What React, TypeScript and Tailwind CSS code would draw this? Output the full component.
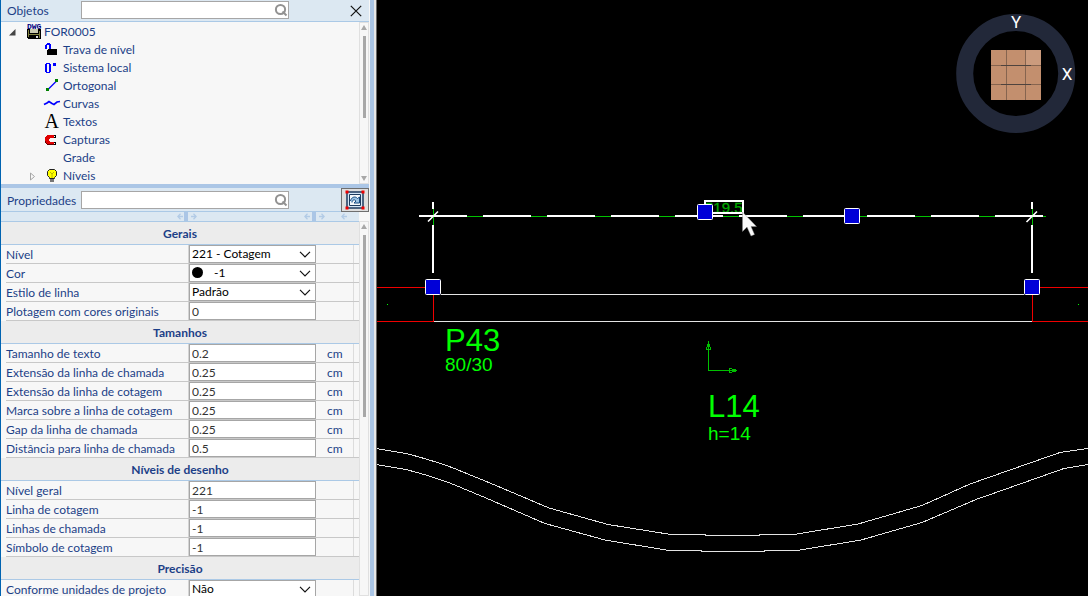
import type { ReactNode } from "react";

function SearchBox({ label, id }: { label: string; id: string }) {
  return (
    <>
      <label htmlFor={id} className="w-[74px] shrink-0 pt-0.5">
        {label}
      </label>
      <div className="relative h-[18px] w-[208px]">
        <input
          id={id}
          type="text"
          className="block h-full w-full border border-[#a6a6a6] bg-white pr-5 pl-1 outline-none"
        />
        <svg className="absolute top-0.5 right-px" width="14" height="14" viewBox="0 0 14 14" fill="none" stroke="#929292" strokeWidth="2">
          <circle cx="6.5" cy="6.5" r="4.6" />
          <path d="M8.5 8.5 12.5 12.5" />
        </svg>
      </div>
    </>
  );
}

function ScrollBar({ thumb, down }: { thumb: string; down?: boolean }) {
  return (
    <div className="flex w-2.5 shrink-0 flex-col items-center border border-[#e0e0e0] bg-[#f7f7f7]">
      <svg className="mt-0.5 mb-1 shrink-0" width="6" height="5" viewBox="0 0 6 5" fill="#a8a8a8">
        <path d="M3 0 6 5H0z" />
      </svg>
      <div className={`w-[3px] bg-[#a8a8a8] ${thumb}`} />
      {down && (
        <svg className="mt-auto mb-0.5 shrink-0" width="6" height="5" viewBox="0 0 6 5" fill="#a8a8a8">
          <path d="M0 0H6L3 5z" />
        </svg>
      )}
    </div>
  );
}

function Icon({ children }: { children?: ReactNode }) {
  return (
    <svg width="16" height="18" viewBox="0 0 16 18" className="shrink-0 overflow-visible" fill="none">
      {children}
    </svg>
  );
}

const treeItems: { name: string; icon: ReactNode; expandable?: boolean }[] = [
  {
    name: "Trava de nível",
    icon: (
      <g shapeRendering="crispEdges">
        <path d="M1 8V4H2V3H3V2H6V3H7V8H5V4H3V8z" fill="#0000ff" />
        <path d="M4 8H13V14H3V9H4z" fill="#000" />
      </g>
    ),
  },
  {
    name: "Sistema local",
    icon: (
      <g shapeRendering="crispEdges" fill="#0000ff">
        <path fillRule="evenodd" d="M2 4H6V5H7V13H6V14H2V13H1V5H2zM3 5V13H5V5z" />
        <path d="M9 4H12V7H9z" />
      </g>
    ),
  },
  {
    name: "Ortogonal",
    icon: (
      <g>
        <path d="M4 12.5 12 4.5" stroke="#0000ff" strokeWidth="1.3" />
        <path d="M2 11H5V14H2zM11 2H14V5H11z" fill="#008000" />
      </g>
    ),
  },
  {
    name: "Curvas",
    icon: <path d="M0 9.5 3 8 5 6.5 8 8.5 10 9.5 13 7 16 6.5" stroke="#0000ff" strokeWidth="1.7" />,
  },
  {
    name: "Textos",
    icon: (
      <text x="0.5" y="15" className="font-['Liberation_Serif',serif]" fontSize="20" fill="#000">
        A
      </text>
    ),
  },
  {
    name: "Capturas",
    icon: (
      <g shapeRendering="crispEdges">
        <path d="M3 4H10V7H6V8H5V10H6V11H10V14H3V13H2V12H1V6H2V5H3z" fill="#e00000" />
        <path d="M3 13H10V14H3zM2 12H3V13H2zM1 10H2V12H1z" fill="#600" />
        <path d="M10 4H12V7H10zM10 11H12V14H10z" fill="#000" />
        <path d="M10 5H11V6H10zM10 12H11V13H10z" fill="#fff" />
      </g>
    ),
  },
  { name: "Grade", icon: null },
  {
    name: "Níveis",
    expandable: true,
    icon: (
      <g>
        <path d="M5.5 11.5V10.5L3.5 8.5V4.5L5.5 2.5H10.5L12.5 4.5V8.5L10.5 10.5V11.5z" fill="#ffff00" stroke="#222" />
        <path d="M6 5 8 7 10 5M8 7V11" stroke="#b8b800" />
        <path d="M6 12H10V15H6z" fill="#777" />
      </g>
    ),
  },
];

function ObjectTree() {
  return (
    <ul className="flex-1 pt-px">
      <li>
        <div className="flex h-[18px] items-center pl-2">
          <svg width="7" height="7" viewBox="0 0 7 7" className="mr-2.5">
            <path d="M6.5 0V6.5H0z" fill="#444" />
          </svg>
          <Icon>
            <text x="1" y="6" fontSize="8" fontWeight="700" fill="#000080" className="font-['Liberation_Mono',monospace]">
              DWG
            </text>
            <g shapeRendering="crispEdges">
              <path d="M1 6H15V16H2V15H1z" fill="#000" />
              <path d="M2 7H3V14H2zM13 8H14V15H13zM3 11H13V12H3z" fill="#808040" />
              <path d="M4 6H12V10H4z" fill="#c9c9b0" />
              <path d="M10 13H12V15H10z" fill="#ddd" />
            </g>
          </Icon>
          <span className="ml-0.5">FOR0005</span>
        </div>
        <ul>
          {treeItems.map((item) => (
            <li key={item.name} className="flex h-[18px] items-center pl-7">
              <span className="w-[15px]">
                {item.expandable && (
                  <svg width="7" height="9" viewBox="0 0 7 9" fill="none" stroke="#a6a6a6">
                    <path d="M1.5 1V8L5.5 4.5z" />
                  </svg>
                )}
              </span>
              <Icon>{item.icon}</Icon>
              <span className="ml-[3px]">{item.name}</span>
            </li>
          ))}
        </ul>
      </li>
    </ul>
  );
}

type Row = { label: string; value: string; unit?: string; select?: boolean; swatch?: boolean };

const sections: { title: string; rows: Row[] }[] = [
  {
    title: "Gerais",
    rows: [
      { label: "Nível", value: "221 - Cotagem", select: true },
      { label: "Cor", value: "-1", select: true, swatch: true },
      { label: "Estilo de linha", value: "Padrão", select: true },
      { label: "Plotagem com cores originais", value: "0" },
    ],
  },
  {
    title: "Tamanhos",
    rows: [
      { label: "Tamanho de texto", value: "0.2", unit: "cm" },
      { label: "Extensão da linha de chamada", value: "0.25", unit: "cm" },
      { label: "Extensão da linha de cotagem", value: "0.25", unit: "cm" },
      { label: "Marca sobre a linha de cotagem", value: "0.25", unit: "cm" },
      { label: "Gap da linha de chamada", value: "0.25", unit: "cm" },
      { label: "Distância para linha de chamada", value: "0.5", unit: "cm" },
    ],
  },
  {
    title: "Níveis de desenho",
    rows: [
      { label: "Nível geral", value: "221" },
      { label: "Linha de cotagem", value: "-1" },
      { label: "Linhas de chamada", value: "-1" },
      { label: "Símbolo de cotagem", value: "-1" },
    ],
  },
  {
    title: "Precisão",
    rows: [{ label: "Conforme unidades de projeto", value: "Não", select: true }],
  },
];

function PropertyRow({ row }: { row: Row }) {
  return (
    <div className="ml-[5px] flex h-[19px] border-b border-[#c8c8c8]">
      <label htmlFor={row.label} className="w-[183px] shrink-0 border-r border-[#d4d4d4] leading-[19px] whitespace-nowrap">
        {row.label}
      </label>
      <div className="relative w-[127px] shrink-0">
        {row.select ? (
          <>
            <select
              id={row.label}
              defaultValue={row.value}
              className={`block h-[18px] w-full appearance-none border border-[#a6a6a6] bg-white text-black outline-none ${row.swatch ? "pl-6" : "pl-0.5"}`}
            >
              <option>{row.value}</option>
            </select>
            {row.swatch && <span className="absolute top-[3px] left-[3px] size-[11px] rounded-full bg-black" />}
            <svg className="pointer-events-none absolute top-1.5 right-[5px]" width="12" height="7" viewBox="0 0 12 7" fill="none" stroke="#111" strokeWidth="1.2">
              <path d="M1 0.8 6 5.8 11 0.8" />
            </svg>
          </>
        ) : (
          <input
            id={row.label}
            type="text"
            defaultValue={row.value}
            className="block h-[18px] w-full border border-[#a6a6a6] bg-white pl-0.5 text-[#333] outline-none"
          />
        )}
      </div>
      <span className="w-[38px] border-r border-[#dcdcdc] pl-[11px] leading-[19px]">{row.unit}</span>
    </div>
  );
}

function Arrow({ right }: { right?: boolean }) {
  return (
    <svg width="6" height="7" viewBox="0 0 6 7" fill="none" stroke="#b2cbe6" strokeWidth="1.3">
      <path d={right ? "M0 3.5H5M2.5 0.8 5.2 3.5 2.5 6.2" : "M6 3.5H1M3.5 0.8 0.8 3.5 3.5 6.2"} />
    </svg>
  );
}

function ColumnHandles() {
  return (
    <div className="flex h-2.5 items-stretch border-b border-[#abc9e6] bg-[#dce8f2]">
      <div className="flex w-[187px] items-center justify-end gap-px">
        <Arrow />
        <span className="h-full w-1 bg-[#abc6e6]" />
      </div>
      <div className="flex w-32 items-center gap-0.5 pl-[3px]">
        <Arrow right />
        <span className="flex-1" />
        <Arrow />
        <span className="h-full w-1 bg-[#abc6e6]" />
      </div>
      <div className="flex flex-1 items-center gap-4 pl-[3px]">
        <Arrow right />
        <Arrow />
      </div>
    </div>
  );
}

function SidePanel() {
  return (
    <aside className="flex h-full w-[377px] shrink-0 overflow-hidden border-l border-[#0063b1] bg-[#f7f7f7]">
      <div className="flex min-w-0 flex-1 flex-col">
        <header className="flex h-[22px] shrink-0 items-center border-b border-[#abc9e6] bg-[#dce8f2] pb-0.5 pl-1.5">
          <SearchBox label="Objetos" id="search-objects" />
          <button type="button" aria-label="Fechar" className="mr-1.5 ml-auto p-px pt-[3px]">
            <svg width="12" height="12" viewBox="0 0 12 12" stroke="#111" strokeWidth="1.2">
              <path d="M0.8 0.8 11.2 11.2M11.2 0.8 0.8 11.2" />
            </svg>
          </button>
        </header>
        <div className="flex h-[162px] shrink-0">
          <ObjectTree />
          <ScrollBar thumb="mt-0.5 h-[82px]" down />
        </div>
        <div className="h-1 shrink-0 bg-[#abc6e6]" />
        <header className="flex h-6 shrink-0 items-center border-b border-[#abc9e6] bg-[#dce8f2] pl-1.5">
          <SearchBox label="Propriedades" id="search-properties" />
          <button
            type="button"
            aria-label="Atualizar seleção"
            className="ml-auto flex h-6 w-7 items-center justify-center self-start border border-[#6f6f6f] bg-[#dedede]"
          >
            <svg width="20" height="20" viewBox="0 0 20 20" fill="none">
              <path d="M2 2H18V18H2z" fill="#d4e6f5" stroke="#1c3a5e" strokeWidth="1.5" />
              <path d="M4.5 4.5H15.5V15.5H4.5z" fill="#f4f8fb" stroke="#1c3a5e" />
              <path d="M5.5 11C6 7.500 10 5.500 12.500 8.500L14.500 7V13H9L11 11C9.500 9 7.500 9.500 7 12.500" fill="#9ec5e4" stroke="#174a80" />
              <path d="M0.5 0.5H3.5V3.5H0.5zM16.5 0.5H19.5V3.5H16.5zM0.5 16.5H3.5V19.5H0.5zM16.5 16.5H19.5V19.5H16.5z" fill="#f00000" />
            </svg>
          </button>
        </header>
        <div className="flex min-h-0 flex-1">
          <div className="flex-1 overflow-hidden">
            <ColumnHandles />
            {sections.map((section) => (
              <section key={section.title}>
                <h2 className="h-[23px] border-b border-[#abc9e6] bg-[#ececec] text-center leading-[23px] font-bold">{section.title}</h2>
                {section.rows.map((row) => (
                  <PropertyRow key={row.label} row={row} />
                ))}
              </section>
            ))}
          </div>
          <div className="flex pt-[9px]">
            <ScrollBar thumb="mt-0.5 h-[182px]" />
          </div>
        </div>
      </div>
      <div className="ml-px w-1 shrink-0 bg-[#abc6e6]" />
      <div className="w-0.5 shrink-0 bg-[#e8e8e8]" />
      <div className="w-px shrink-0 bg-[#666]" />
    </aside>
  );
}

const greenDashes = [467, 531, 595, 659, 723, 787, 851, 915, 979];
const grips = [
  [425, 279],
  [697, 204],
  [844, 208],
  [1024, 279],
];

function Drawing() {
  return (
    <svg
      className="block h-full w-full font-['Liberation_Sans',Arial,sans-serif]"
      viewBox="377 0 711 596"
      preserveAspectRatio="xMidYMid slice"
      fill="none"
    >
      <g shapeRendering="crispEdges">
        <path d="M441 294.500H1024M434 321.500H1032" stroke="#e4e4e4" />
        <path d="M377 287.500H425M377 321.500H433M433.500 295V322M1040 287.500H1088M1032.500 295V322M1033 321.500H1088" stroke="#f00000" />
        <path d="M387 304H388V305H387zM1078 304H1079V305H1078z" fill="#00ff00" />
        <path d="M419 216H1043" stroke="#fff" strokeWidth="2" />
        {greenDashes.map((x) => (
          <g key={x}>
            <path d={`M${x} 216H${x + 16}`} stroke="#000" strokeWidth="2" />
            <path d={`M${x} 216.500H${x + 16}`} stroke="#00c000" />
          </g>
        ))}
        <path d="M1043 216.500H1046M433.500 209V225M1032.500 209V225" stroke="#00c000" />
        <path d="M433 202V209M433 225V273M1032 202V209M1032 225V273" stroke="#fff" strokeWidth="2" />
        <path
          d="M376 448.500 406 453.500Q428 459 452 467.500L490 483 549 508 608 524.500 671 534.500 704 534.500 707 535.500 758 535.500 761 534.500 794 534.500 858 524 922 505.500 970 484 1060 452.500 1088 448.500"
          stroke="#e4e4e4"
        />
        <path
          d="M376 464.500 406 469.500Q428 475 450 483L486 498 545 523.500 605 540 669 550.500 700 550.500 703 551.500 763 551.500 766 550.500 797 550.500 861 540 922 522.500 976 499.500 1064 468.500 1088 464.500"
          stroke="#e4e4e4"
        />
        <path
          d="M708.500 341V370.500H737M706.500 349.500H710.500L709.500 344H707.500zM729.500 368.500V372.500L735 371.500V369.500z"
          stroke="#00c000"
        />
      </g>
      <path d="M428 221.500 438 211.500M1026.500 222 1037 211.500" stroke="#fff" strokeWidth="1.6" />

      <g fill="#00ff00">
        <text x="445" y="351" fontSize="31">P43</text>
        <text x="445" y="371" fontSize="19">80/30</text>
        <text x="708" y="417" fontSize="31">L14</text>
        <text x="708" y="440" fontSize="19">h=14</text>
      </g>

      <path d="M705 201H743V213H705z" fill="#000" />
      <text x="705" y="213" fontSize="15" fill="#00a800" stroke="#00a800" strokeWidth="0.3">519.5</text>
      <path d="M705 201H743V213H705z" stroke="#fff" strokeWidth="2" shapeRendering="crispEdges" />

      {grips.map(([x, y]) => (
        <rect key={x} x={x + 0.5} y={y + 0.5} width="15" height="15" rx="1" fill="#0000d8" stroke="#fff" />
      ))}

      <path d="M742.500 212V231.500L747 227 751 236 754.500 234.500 751 226.500H756.500z" fill="#f8f8f8" stroke="#888" strokeWidth="0.4" />

      <circle cx="1015.700" cy="73.500" r="51" stroke="#222839" strokeWidth="17" />
      <path d="M991 50H1041V100H991z" fill="#c38f6e" />
      <path d="M1025 50H1041V66H1025z" fill="#cb9b7d" />
      <path d="M1006.500 50V100M1025.500 50V100M991 65.500H1041M991 84.500H1041" stroke="#86644f" />
      <path d="M1001 65.500H1031M1001 84.500H1031" stroke="#4e433e" />
      <g fill="#fff" fontSize="17" textAnchor="middle" className="font-['Roboto',sans-serif]">
        <text x="1016" y="28">Y</text>
        <text x="1067" y="80">X</text>
      </g>
    </svg>
  );
}

export default function App() {
  return (
    <div className="flex h-screen overflow-hidden bg-black font-['Lato','Open_Sans',sans-serif] text-[12px] leading-4 text-[#1c3f87]">
      <SidePanel />
      <main className="min-w-0 flex-1">
        <Drawing />
      </main>
    </div>
  );
}
